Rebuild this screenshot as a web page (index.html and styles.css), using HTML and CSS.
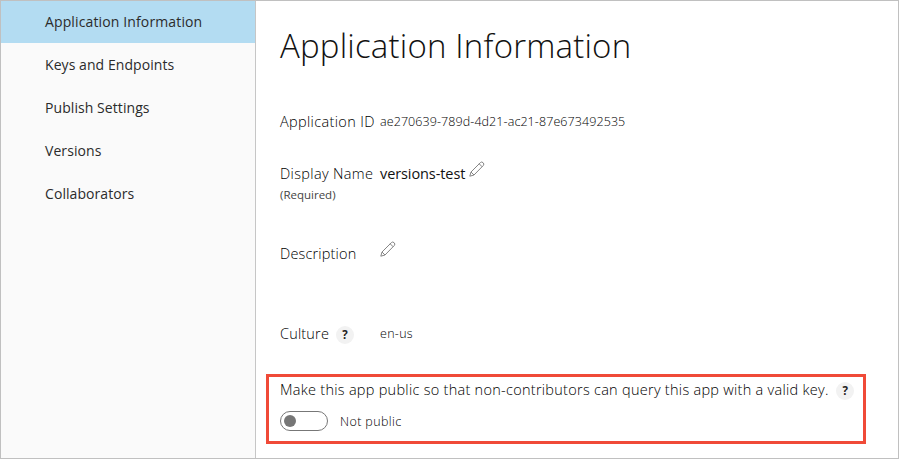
FILE: index.html
```html
<!DOCTYPE html>
<html lang="en">
<head>
<meta charset="utf-8">
<title>Application Information</title>
<link rel="stylesheet" href="styles.css">
</head>
<body>
<div class="app">
  <nav class="sidebar">
    <a class="nav-item active">Application Information</a>
    <a class="nav-item">Keys and Endpoints</a>
    <a class="nav-item">Publish Settings</a>
    <a class="nav-item">Versions</a>
    <a class="nav-item">Collaborators</a>
  </nav>
  <main class="content">
    <h1>Application Information</h1>
    <div class="row row-id"><span class="label wide">Application ID</span><span class="value v-id">ae270639-789d-4d21-ac21-87e673492535</span></div>
    <div class="row row-name"><span class="label wide">Display Name</span><span class="value name">versions-test</span>
      <svg class="pencil" viewBox="0 0 16 16"><path d="M.8 15.2 2 11 11.4 1.6Q12.6.4 14 1.6q1.600 1.400.4 2.800L5 14ZM2 11l3 3M10.200 2.800l3 3"/></svg></div>
    <div class="required">(Required)</div>
    <div class="row row-desc"><span class="label">Description</span>
      <svg class="pencil" viewBox="0 0 16 16"><path d="M.8 15.2 2 11 11.4 1.6Q12.6.4 14 1.6q1.600 1.400.4 2.800L5 14ZM2 11l3 3M10.200 2.800l3 3"/></svg></div>
    <div class="row row-culture"><span class="label">Culture<span class="help">?</span></span><span class="value culture">en-us</span></div>
    <section class="public">
      <div class="public-title">Make this app public so that non-contributors can query this app with a valid key.<span class="help">?</span></div>
      <div class="public-toggle"><span class="toggle"></span>Not public</div>
    </section>
  </main>
</div>
</body>
</html>
```
FILE: styles.css
```css
* { box-sizing: border-box; }
body { margin: 0; font-family: "Open Sans", "Noto Sans", sans-serif; color: #000; background: #fff; }
.app { display: flex; width: 899px; height: 459px; border: 1px solid #c0c0c0; overflow: hidden; }
.sidebar { width: 255px; flex: none; background: #fafafa; border-right: 1px solid #c6c6c6; }
.nav-item { display: flex; align-items: center; height: 43px; padding: 0 0 1px 44px; font-size: 14px; letter-spacing: .07px; color: #2b2b2b; white-space: nowrap; }
.nav-item.active { height: 42px; background: #b3dcf2; letter-spacing: .13px; }
.content { flex: 1; padding-left: 24px; font-weight: 300; white-space: nowrap; }
h1 { margin: 22px 0 0; height: 46px; line-height: 46px; font-size: 33px; font-weight: 300; letter-spacing: .19px; color: #111; }
.row { display: flex; align-items: center; height: 20px; font-size: 14.5px; }
.label { width: 100px; flex: none; display: flex; align-items: center; letter-spacing: .17px; }
.label.wide { letter-spacing: .34px; }
.row-id { margin-top: 42px; }
.value { font-size: 12.5px; letter-spacing: .085px; }
.value.culture { letter-spacing: .3px; }
.value.name { font-size: 14.5px; color: #111; font-weight: 400; letter-spacing: -.09px; }
.row-name { margin-top: 32px; }
.pencil { width: 16px; height: 16px; margin: -8px 0 0 4px; fill: none; stroke: #858585; stroke-width: 1; }
.required { height: 20px; line-height: 20px; margin-top: 2px; font-size: 11.5px; font-weight: 400; color: #444; }
.row-desc { margin-top: 38px; }
.row-desc .pencil { margin-left: 0; }
.row-culture { margin-top: 60px; }
.help { width: 18px; height: 18px; margin: 3px 0 0 7px; border-radius: 50%; background: #f2f2f2; font-size: 11.5px; line-height: 18px; font-weight: 700; text-align: center; letter-spacing: 0; color: #222; }
.public { width: 600px; height: 70px; margin: 31px 0 0 -14px; padding: 2px 0 0 11px; border: 3px solid #f04a38; }
.public-title { display: flex; align-items: center; height: 20px; font-size: 14.5px; letter-spacing: .275px; }
.public-title .help { margin-left: 7.500px; }
.public-toggle { display: flex; align-items: center; height: 20px; margin-top: 12px; font-size: 12.5px; letter-spacing: .4px; }
.toggle { width: 48px; height: 20px; margin-right: 12px; padding: 3px; border: 1px solid #777; border-radius: 10px; }
.toggle::before { content: ""; display: block; width: 12px; height: 12px; border-radius: 50%; background: #767676; }
```
